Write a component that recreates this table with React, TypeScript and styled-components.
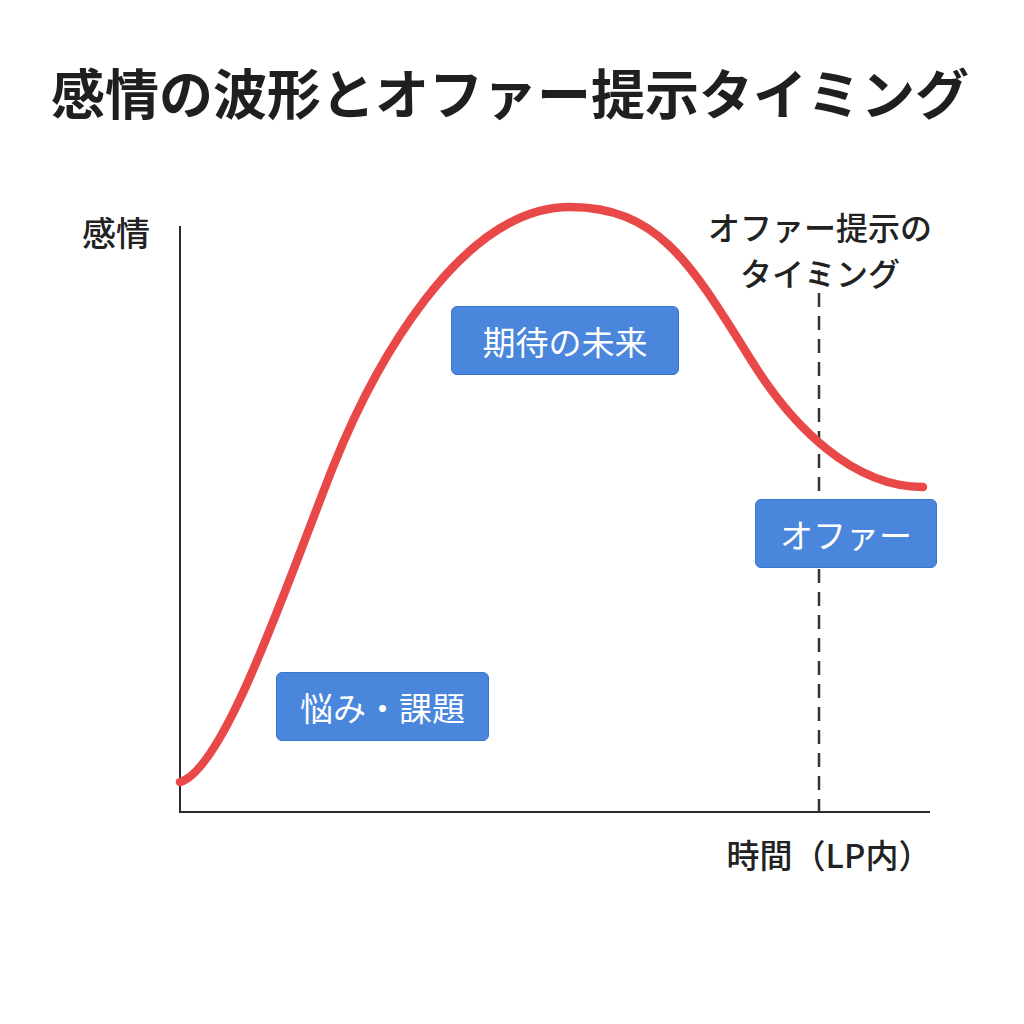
import React from "react";
import styled, { createGlobalStyle } from "styled-components";

const GlobalStyle = createGlobalStyle`
    html, body {
        margin: 0;
        padding: 0;
        background: #ffffff;
    }
    body {
        font-family: "Noto Sans CJK JP", "Noto Sans", sans-serif;
        color: #222222;
    }
`;

const TOP = 128;

const Page = styled.div`
    width: 1024px;
    height: 1024px;
    display: flex;
    flex-direction: column;
    background: #ffffff;
    overflow: hidden;
`;

const Title = styled.h1`
    margin: 0;
    padding-top: 56px;
    height: ${TOP - 56}px;
    line-height: 72px;
    font-size: 54px;
    font-weight: 700;
    text-align: center;
    color: #1f1f1f;
    padding-right: 4px;
`;

const Chart = styled.div`
    position: relative;
    flex: 1;
`;

const Plot = styled.svg`
    position: absolute;
    inset: 0;
    width: 100%;
    height: 100%;
`;

const AxisText = styled.div<{ $x: number; $y: number; $size: number }>`
    position: absolute;
    left: ${(p) => p.$x}px;
    top: ${(p) => p.$y - TOP}px;
    transform: translate(-50%, -50%);
    font-size: ${(p) => p.$size}px;
    line-height: 1.45;
    font-weight: 500;
    color: #222222;
    text-align: center;
    white-space: nowrap;
`;

const Tag = styled.div<{ $x: number; $y: number; $w: number }>`
    position: absolute;
    left: ${(p) => p.$x}px;
    top: ${(p) => p.$y - TOP}px;
    width: ${(p) => p.$w}px;
    height: 69px;
    box-sizing: border-box;
    display: flex;
    align-items: center;
    justify-content: center;
    background: #4a86dc;
    border: 1px solid #3a74cf;
    border-radius: 6px;
    color: #ffffff;
    font-size: 33px;
    font-weight: 400;
    white-space: nowrap;
`;

// emotion wave: rise from the problem, peak at the future, settle at the offer
const WAVE =
    "M180,782 C225,770 290,575 333,467 C373,367 460,207 570,207 " +
    "C660,207 693,267 753,363 C793,427 853,487 923,487";

export default function App() {
    return (
        <>
            <GlobalStyle />
            <Page>
                <Title>感情の波形とオファー提示タイミング</Title>
                <Chart>
                    <Plot viewBox={`0 ${TOP} 1024 ${1024 - TOP}`}>
                        <line x1={180} y1={226} x2={180} y2={813} stroke="#2b2b2b" strokeWidth={2} />
                        <line x1={179} y1={812} x2={930} y2={812} stroke="#2b2b2b" strokeWidth={2} />
                        <line
                            x1={819}
                            y1={270}
                            x2={819}
                            y2={812}
                            stroke="#333333"
                            strokeWidth={2.5}
                            strokeDasharray="14 9"
                        />
                        <path
                            d={WAVE}
                            fill="none"
                            stroke="#e94848"
                            strokeWidth={8.5}
                            strokeLinecap="round"
                            strokeLinejoin="round"
                        />
                    </Plot>

                    <AxisText $x={116} $y={232} $size={34}>
                        感情
                    </AxisText>
                    <AxisText $x={820} $y={249} $size={32}>
                        オファー提示の
                        <br />
                        タイミング
                    </AxisText>
                    <AxisText $x={829} $y={855} $size={33}>
                        時間（LP内）
                    </AxisText>

                    <Tag $x={451} $y={306} $w={228}>
                        期待の未来
                    </Tag>
                    <Tag $x={755} $y={499} $w={182}>
                        オファー
                    </Tag>
                    <Tag $x={276} $y={672} $w={213}>
                        悩み・課題
                    </Tag>
                </Chart>
            </Page>
        </>
    );
}
